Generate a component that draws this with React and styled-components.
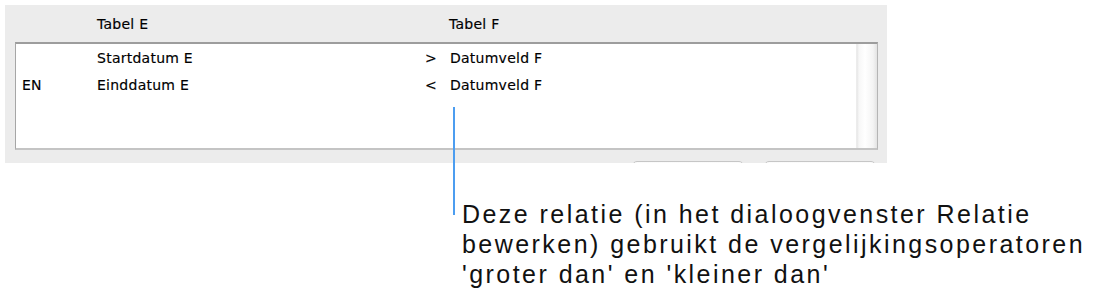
import styled, { createGlobalStyle } from "styled-components";

const GlobalStyle = createGlobalStyle`
  html, body {
    margin: 0;
    padding: 0;
    background: #ffffff;
  }
`;

const PageUI = styled.div`
  position: relative;
  width: 1102px;
  height: 303px;
  padding: 5px 0 0 5px;
  box-sizing: border-box;
  overflow: hidden;
`;

const PanelUI = styled.div`
  width: 882px;
  height: 158px;
  background: #ececec;
  padding: 0 9px 0 10px;
  box-sizing: border-box;
  overflow: hidden;
  font-family: "DejaVu Sans", "Liberation Sans", sans-serif;
  font-size: 14px;
  letter-spacing: 0.25px;
  color: #000;
  -webkit-text-stroke: 0.15px #000;
`;

const HeaderUI = styled.div`
  display: grid;
  grid-template-columns: 82px 352px 1fr;
  height: 37px;
  align-items: center;
`;

const HeaderCellUI = styled.div`
  padding-top: 1px;
`;

const ListUI = styled.div`
  display: flex;
  height: 108px;
  background: #ffffff;
  border-top: 2px solid #9d9d9d;
  border-left: 1px solid #a6a6a6;
  border-right: 1px solid #b5b5b5;
  border-bottom: 2px solid #c4c4c4;
  box-sizing: border-box;
`;

const RowsUI = styled.div`
  flex: 1;
  display: flex;
  flex-direction: column;
`;

const RowUI = styled.div`
  display: grid;
  grid-template-columns: 75px 328px 25px 1fr;
  height: 27px;
  align-items: center;
  padding-left: 6px;
`;

const ScrollTrackUI = styled.div`
  width: 20px;
  background: linear-gradient(to right, #e6e6e6 0px, #f7f7f7 2px, #ffffff 8px, #f4f4f4 16px, #e3e3e3 20px);
  border-left: 1px solid #ececec;
`;

const ButtonsUI = styled.div`
  display: flex;
  justify-content: flex-end;
  gap: 20px;
  margin-top: 11px;
  padding-right: 2px;
`;

const ButtonUI = styled.div`
  width: 110px;
  height: 20px;
  border: 1px solid #c6c6c6;
  border-radius: 5px;
  background: linear-gradient(#fbfbfb, #f0f0f0);
`;

const CalloutLineUI = styled.div`
  position: absolute;
  left: 453px;
  top: 107px;
  width: 2px;
  height: 108px;
  background: #4c9df0;
`;

const CalloutTextUI = styled.div`
  position: absolute;
  left: 462px;
  top: 199px;
  font-family: "Liberation Sans", Arial, sans-serif;
  font-size: 25px;
  line-height: 30px;
  letter-spacing: 2.45px;
  color: #111;
`;

const rows = [
  { join: "", left: "Startdatum E", op: ">", right: "Datumveld F" },
  { join: "EN", left: "Einddatum E", op: "<", right: "Datumveld F" },
];

export default function App() {
  return (
    <PageUI>
      <GlobalStyle />
      <PanelUI>
        <HeaderUI>
          <HeaderCellUI />
          <HeaderCellUI>Tabel E</HeaderCellUI>
          <HeaderCellUI>Tabel F</HeaderCellUI>
        </HeaderUI>
        <ListUI>
          <RowsUI>
            {rows.map((r, i) => (
              <RowUI key={i}>
                <div>{r.join}</div>
                <div>{r.left}</div>
                <div>{r.op}</div>
                <div>{r.right}</div>
              </RowUI>
            ))}
          </RowsUI>
          <ScrollTrackUI />
        </ListUI>
        <ButtonsUI>
          <ButtonUI />
          <ButtonUI />
        </ButtonsUI>
      </PanelUI>
      <CalloutLineUI />
      <CalloutTextUI>
        Deze relatie (in het dialoogvenster Relatie
        <br />
        bewerken) gebruikt de vergelijkingsoperatoren
        <br />
        'groter dan' en 'kleiner dan'
      </CalloutTextUI>
    </PageUI>
  );
}
